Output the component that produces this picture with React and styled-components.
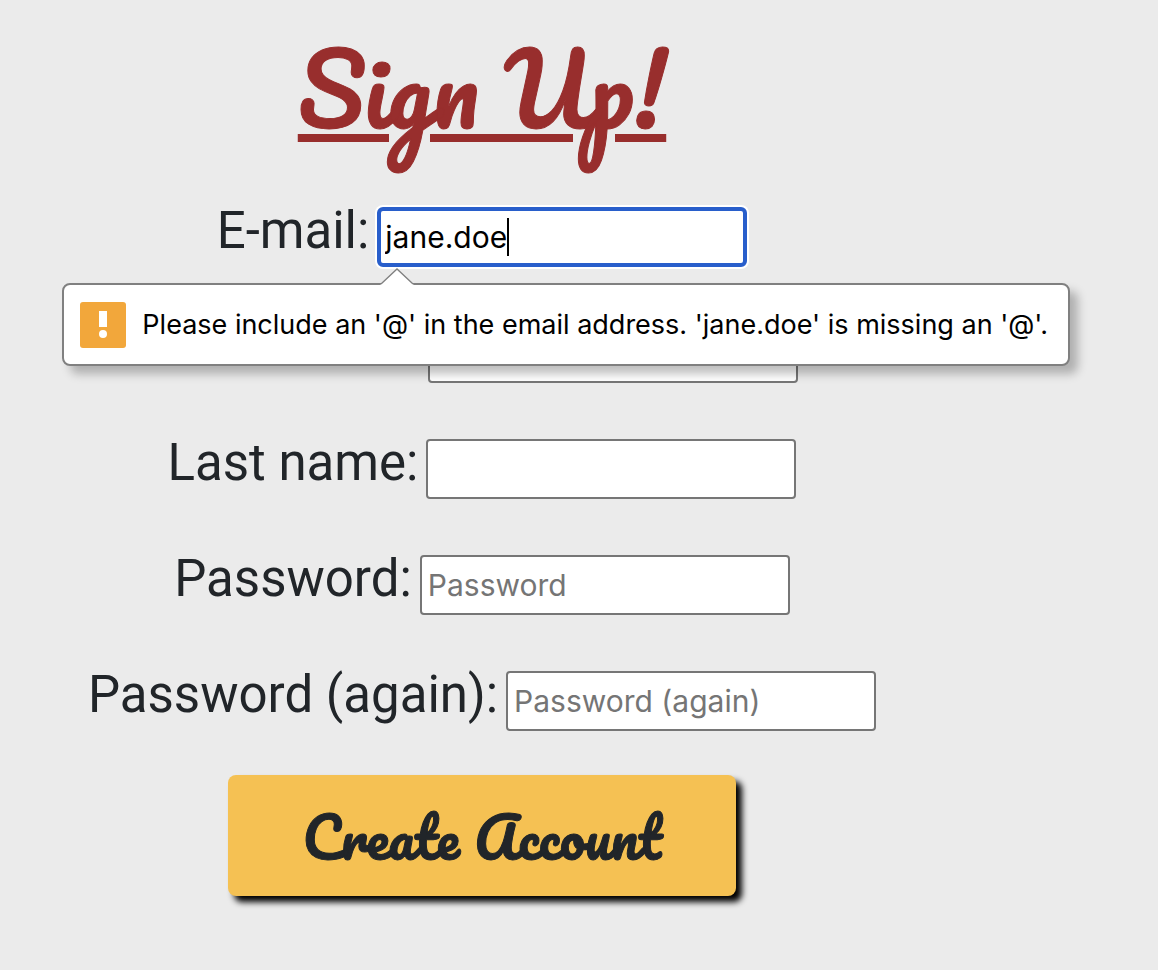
import React from "react";
import styled, { createGlobalStyle } from "styled-components";

const GlobalStyle = createGlobalStyle`
  *, *::before, *::after { box-sizing: border-box; }
  body {
    margin: 0;
    background: #ebebeb;
    color: #212529;
    font-family: Roboto, "Liberation Sans", sans-serif;
  }
`;

const Page = styled.main`
  display: flex;
  flex-direction: column;
  align-items: center;
  padding: 16px 194px 74px 0;
`;

const Title = styled.h1`
  margin: 0 0 41px;
  color: #982e2d;
  font-family: Pacifico, Lato, sans-serif;
  font-size: 96px;
  font-weight: 400;
  line-height: 144px;
  white-space: nowrap;
  -webkit-text-stroke: 1px #982e2d;
  text-decoration: underline;
  text-decoration-thickness: 8px;
  text-underline-offset: 5px;
`;

const Form = styled.form`
  display: flex;
  flex-direction: column;
  align-items: center;
  gap: 50px;
`;

const Row = styled.div`
  display: flex;
  align-items: baseline;
  gap: 8px;
  height: 66px;
`;

const Label = styled.label`
  font-size: 51px;
  line-height: 60px;
  white-space: nowrap;
`;

const Field = styled.div`
  position: relative;
`;

const Input = styled.input`
  display: block;
  width: 370px;
  height: 60px;
  padding: 2px 6px;
  border: 2px solid #767676;
  border-radius: 4px;
  outline: none;
  background: #fff;
  color: #000;
  font-family: Inter, sans-serif;
  font-size: 30px;

  &::placeholder { color: #757575; }

  &[aria-invalid="true"] {
    padding: 2px 4px;
    border: 4px solid #285ecb;
    border-radius: 6px;
    box-shadow: 0 0 0 2px #fff;
  }
`;

const Caret = styled.span`
  position: absolute;
  top: 11px;
  left: 130px;
  width: 2px;
  height: 38px;
  background: #000;
`;

const Bubble = styled.div`
  position: absolute;
  z-index: 1;
  top: 76px;
  left: -315px;
  display: flex;
  align-items: center;
  gap: 16px;
  height: 83px;
  padding: 0 20px 0 16px;
  border: 2px solid #808080;
  border-radius: 8px;
  background: #fff;
  box-shadow: 8px 8px 10px rgba(0, 0, 0, 0.25);
  color: #000;
  font-family: Inter, sans-serif;
  font-size: 27px;
  white-space: nowrap;
`;

const Pointer = styled.svg`
  position: absolute;
  top: -17px;
  left: 316px;
`;

const Submit = styled.button`
  width: 508px;
  height: 121px;
  margin-top: -6px;
  padding: 0;
  border: 0;
  border-radius: 8px;
  background: #f5c153;
  box-shadow: 6px 6px 6px #000;
  color: #212529;
  font-family: Pacifico, Lato, sans-serif;
  font-size: 56px;
  font-weight: 400;
  line-height: 84px;
  -webkit-text-stroke: 1px #212529;
`;

const FIELDS = [
  { id: "first", label: "First name:", type: "text" },
  { id: "last", label: "Last name:", type: "text" },
  { id: "password", label: "Password:", type: "password", placeholder: "Password" },
  { id: "again", label: "Password (again):", type: "password", placeholder: "Password (again)" },
];

function WarningIcon() {
  return (
    <svg width="46" height="46" viewBox="0 0 46 46" aria-hidden="true">
      <rect width="46" height="46" rx="3" fill="#f2a73b" />
      <rect x="19" y="9" width="8" height="16" fill="#fff" />
      <circle cx="23" cy="32" r="4" fill="#fff" />
    </svg>
  );
}

export default function App() {
  return (
    <>
      <GlobalStyle />
      <Page>
        <Title>Sign Up!</Title>
        <Form noValidate onSubmit={(e) => e.preventDefault()}>
          <Row>
            <Label htmlFor="email">E-mail:</Label>
            <Field>
              <Input
                id="email"
                type="email"
                defaultValue="jane.doe"
                aria-invalid="true"
                aria-describedby="email-error"
              />
              <Caret />
              <Bubble id="email-error" role="alert">
                <Pointer width="34" height="18" viewBox="0 0 34 18" aria-hidden="true">
                  <path d="M0 18 L1 16 L17 1 L33 16 L34 18 Z" fill="#fff" />
                  <path d="M1 16 L17 1 L33 16" fill="none" stroke="#808080" strokeWidth="1.3" />
                </Pointer>
                <WarningIcon />
                <span>Please include an '@' in the email address. 'jane.doe' is missing an '@'.</span>
              </Bubble>
            </Field>
          </Row>
          {FIELDS.map(({ id, label, type, placeholder }) => (
            <Row key={id}>
              <Label htmlFor={id}>{label}</Label>
              <Field>
                <Input id={id} type={type} placeholder={placeholder} />
              </Field>
            </Row>
          ))}
          <Submit type="submit">Create Account</Submit>
        </Form>
      </Page>
    </>
  );
}
